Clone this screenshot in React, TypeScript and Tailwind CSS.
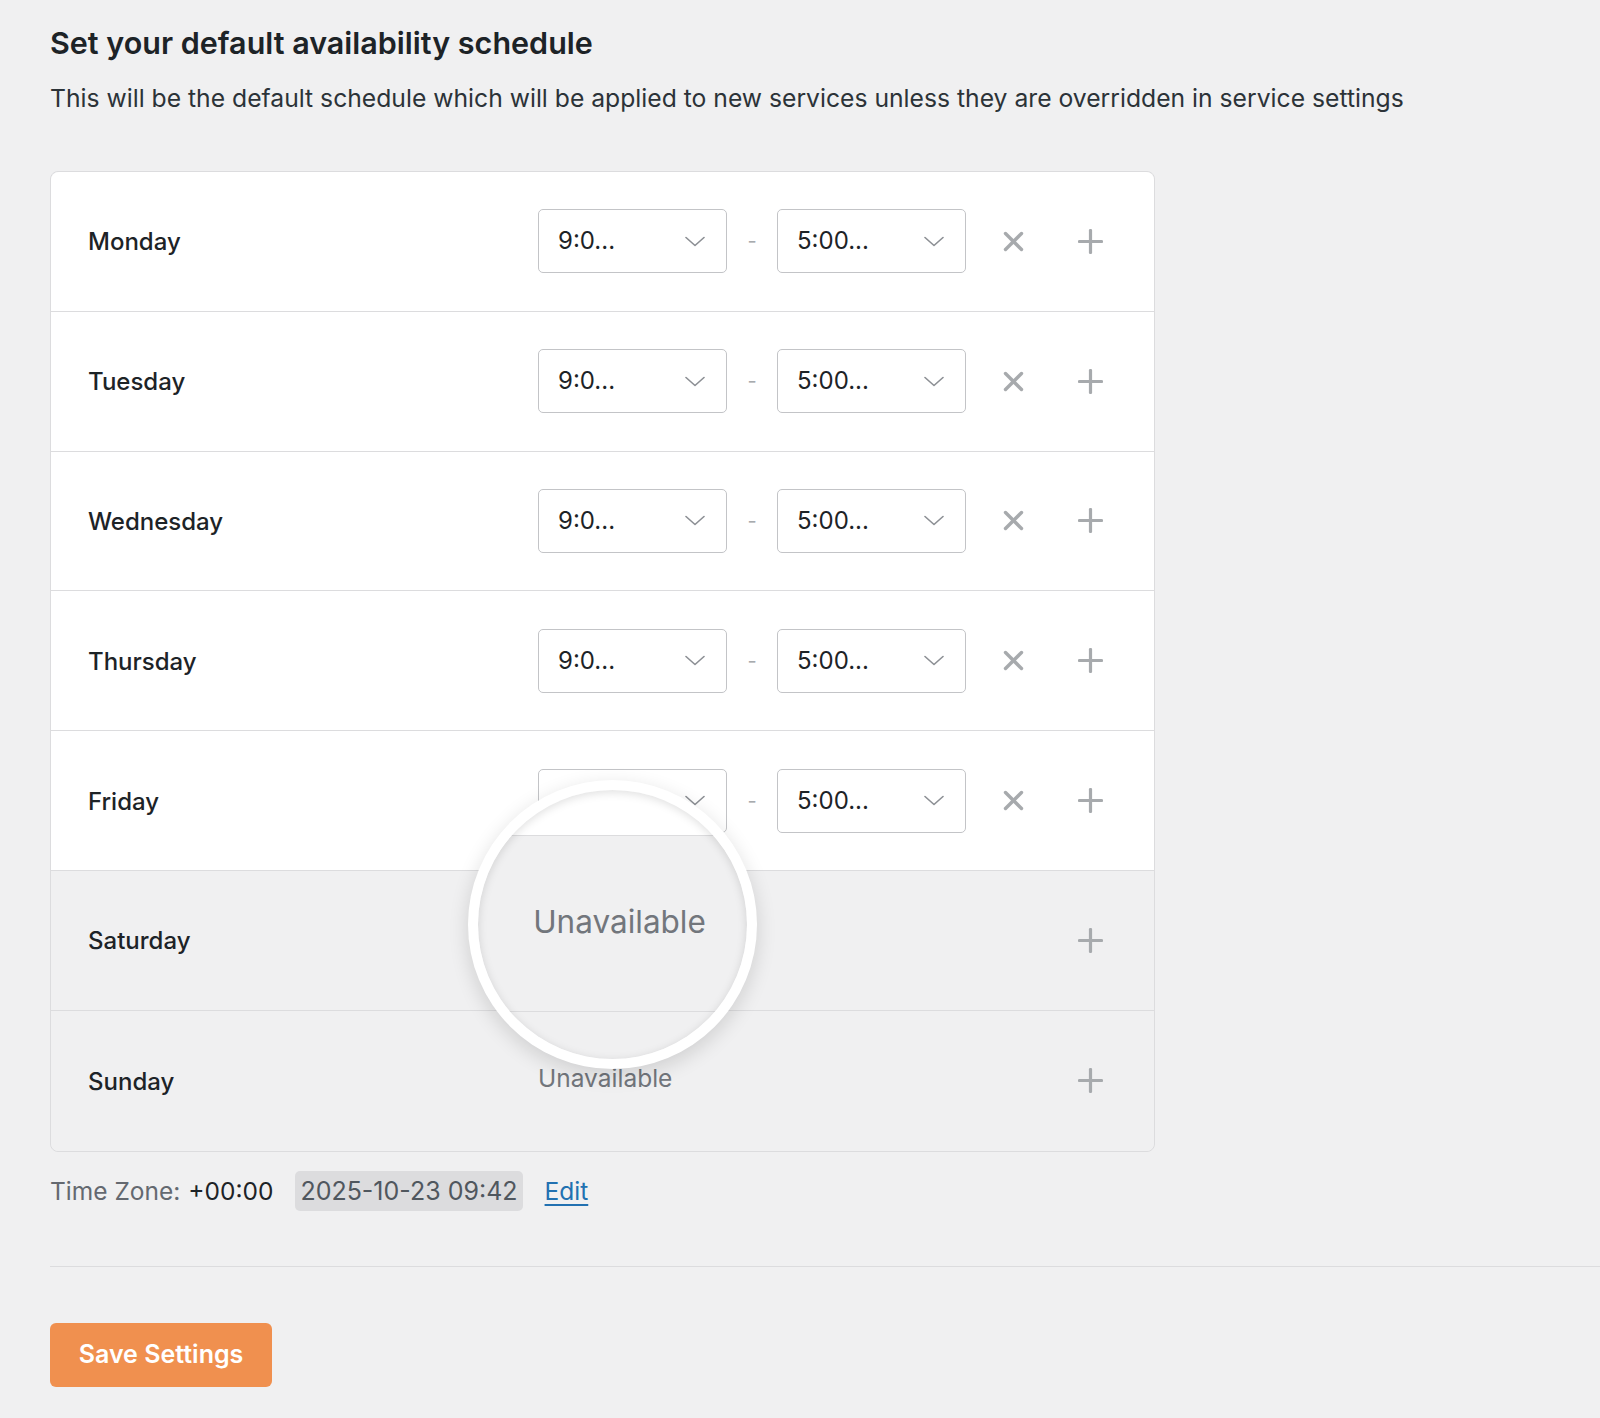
import React from 'react'

const days = [
  { name: 'Monday', open: true },
  { name: 'Tuesday', open: true },
  { name: 'Wednesday', open: true },
  { name: 'Thursday', open: true },
  { name: 'Friday', open: true },
  { name: 'Saturday', open: false },
  { name: 'Sunday', open: false },
]

const Chevron = () => (
  <svg width="20" height="11" viewBox="0 0 20 11" fill="none">
    <polyline points="1,1.5 10,9.5 19,1.5" stroke="#8c8f94" strokeWidth="1.6" strokeLinecap="round" strokeLinejoin="round" />
  </svg>
)

const CrossIcon = () => (
  <svg width="21" height="21" viewBox="0 0 21 21" fill="none">
    <line x1="2.5" y1="2.5" x2="18.5" y2="18.5" stroke="#a7aaad" strokeWidth="3.4" strokeLinecap="round" />
    <line x1="18.5" y1="2.5" x2="2.5" y2="18.5" stroke="#a7aaad" strokeWidth="3.4" strokeLinecap="round" />
  </svg>
)

const PlusIcon = () => (
  <svg width="25" height="25" viewBox="0 0 25 25" fill="none">
    <line x1="12.5" y1="1.5" x2="12.5" y2="23.5" stroke="#a7aaad" strokeWidth="3.2" strokeLinecap="round" />
    <line x1="1.5" y1="12.5" x2="23.5" y2="12.5" stroke="#a7aaad" strokeWidth="3.2" strokeLinecap="round" />
  </svg>
)

const TimeSelect = ({ value }: { value: string }) => (
  <div className="flex items-center justify-between w-[189px] h-[64px] bg-white border border-[#c3c4c7] rounded-[5px] pl-[19px] pr-[21px]">
    <span className="text-[24px] text-[#1d2327]">{value}</span>
    <Chevron />
  </div>
)

const DayRow = ({ name, open, last }: { name: string; open: boolean; last: boolean }) => (
  <div
    className={`flex items-center h-[139.8px] pl-[37px] pr-[51px] ${open ? 'bg-white' : 'bg-[#f0f0f1]'} ${last ? '' : 'border-b border-[#dcdcde]'}`}
  >
    <div className="w-[450px] pt-[2px] text-[24px] font-medium text-[#1d2327]">{name}</div>
    {open ? (
      <div className="flex items-center flex-1">
        <TimeSelect value="9:0..." />
        <div className="w-[50px] text-center text-[20px] text-[#a7aaad]">-</div>
        <TimeSelect value="5:00..." />
        <div className="ml-[37px]">
          <CrossIcon />
        </div>
        <div className="ml-auto">
          <PlusIcon />
        </div>
      </div>
    ) : (
      <div className="flex items-center flex-1">
        <span className="text-[24.5px] text-[#72767c] -mt-[4px]">Unavailable</span>
        <div className="ml-auto">
          <PlusIcon />
        </div>
      </div>
    )}
  </div>
)

const Magnifier = () => (
  <div className="absolute left-[417px] top-[608px] w-[289px] h-[289px] rounded-full bg-white p-[10px] shadow-[0_6px_20px_rgba(0,0,0,0.14)]">
    <div className="relative w-full h-full rounded-full overflow-hidden bg-[#f0f0f1]">
      <div className="h-[46px] bg-white border-b border-[#dcdcde]" />
      <div className="h-[176px] flex items-center justify-center pl-[14px] pb-[4px] border-b border-[#dcdcde]">
        <span className="text-[31.5px] text-[#72767c]">Unavailable</span>
      </div>
      <div className="absolute inset-0 rounded-full shadow-[inset_0_2px_10px_rgba(0,0,0,0.13)]" />
    </div>
  </div>
)

export default function App() {
  return (
    <div className="min-h-screen bg-[#f0f0f1] pl-[50px] pt-[25px] pb-[40px] font-['Inter','Noto_Sans',sans-serif] text-[#1d2327]">
      <h1 className="text-[30.5px] leading-[36px] font-semibold text-[#1d2327]">Set your default availability schedule</h1>
      <p className="mt-[21px] text-[24.7px] leading-[32px] text-[#2c3338]">
        This will be the default schedule which will be applied to new services unless they are overridden in service settings
      </p>

      <div className="relative mt-[57px] w-[1105px] border border-[#dcdcde] rounded-[8px]">
        <div className="rounded-[8px] overflow-hidden">
          {days.map((d, i) => (
            <DayRow key={d.name} name={d.name} open={d.open} last={i === days.length - 1} />
          ))}
        </div>
        <Magnifier />
      </div>

      <div className="flex items-center mt-[19px] text-[24.5px] leading-[30px]">
        <span className="text-[#646970]">Time Zone:</span>
        <span className="ml-[8px] text-[#1d2327]">+00:00</span>
        <span className="ml-[22px] px-[5px] h-[40px] flex items-center bg-[#dcdcde] rounded-[5px] text-[25px] text-[#50575e]">2025-10-23 09:42</span>
        <a href="#" className="ml-[22px] text-[#2271b1] underline underline-offset-[4px]">Edit</a>
      </div>

      <div className="mt-[55px] border-t border-[#dcdcde]" />

      <button className="mt-[56px] w-[222px] h-[64px] rounded-[6px] bg-[#f0904f] text-white text-[25px] font-semibold">
        Save Settings
      </button>
    </div>
  )
}
